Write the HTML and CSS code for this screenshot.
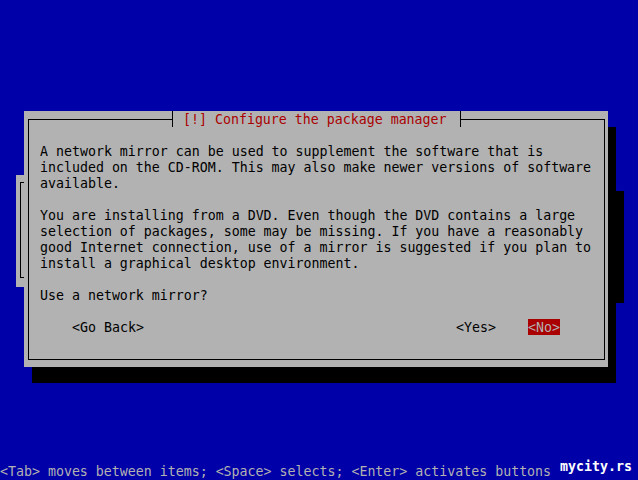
FILE: index.html
```html
<!DOCTYPE html>
<html lang="en">
<head>
<meta charset="utf-8">
<title>Configure the package manager</title>
<link rel="stylesheet" href="styles.css">
</head>
<body>
<div class="screen">
  <div class="back-shadow"></div>
  <div class="back-box"><div class="back-frame"></div></div>
  <div class="dlg-shadow"></div>
  <div class="dialog">
    <div class="frame">
      <div class="content">
        <p>A network mirror can be used to supplement the software that is<br>included on the CD-ROM. This may also make newer versions of software<br>available.</p>
        <p>You are installing from a DVD. Even though the DVD contains a large<br>selection of packages, some may be missing. If you have a reasonably<br>good Internet connection, use of a mirror is suggested if you plan to<br>install a graphical desktop environment.</p>
        <p>Use a network mirror?</p>
        <div class="buttons">
          <span class="btn">&lt;Go Back&gt;</span>
          <span class="spacer"></span>
          <span class="btn">&lt;Yes&gt;</span>
          <span class="btn btn-active">&lt;No&gt;</span>
        </div>
      </div>
    </div>
  </div>
  <div class="title"><div class="title-inner">[!] Configure the package manager</div></div>
  <div class="status">&lt;Tab&gt; moves between items; &lt;Space&gt; selects; &lt;Enter&gt; activates buttons</div>
</div>
<div class="watermark">mycity.rs</div>
</body>
</html>
```
FILE: styles.css
```css
html, body {
  margin: 0;
  padding: 0;
}
body {
  width: 638px;
  height: 480px;
  overflow: hidden;
  background: #0000a8;
  position: relative;
  font-family: "DejaVu Sans Mono", "Liberation Mono", monospace;
  font-size: 13.288px;
  line-height: 16px;
  color: #000;
}
.screen {
  display: grid;
  grid-template-columns: repeat(80, 8px);
  grid-template-rows: repeat(30, 16px);
  width: 640px;
  margin-top: -1px;
}
.back-shadow {
  grid-column: 4 / 79;
  grid-row: 13 / 20;
  background: #000;
}
.back-box {
  grid-column: 3 / 77;
  grid-row: 12 / 19;
  background: #b2b2b2;
  display: flex;
}
.back-frame {
  flex: 1;
  margin: 7px 3px 9px 4px;
  border: 1px solid #000;
}
.dlg-shadow {
  grid-column: 5 / 78;
  grid-row: 9 / 25;
  background: #000;
}
.dialog {
  grid-column: 4 / 77;
  grid-row: 8 / 24;
  background: #b2b2b2;
  display: flex;
  flex-direction: column;
}
.frame {
  flex: 1;
  margin: 8px 3px 7px 4px;
  border: 1px solid #000;
  padding: 24px 4px 0 11px;
}
.content p {
  margin: 0 0 16px;
  white-space: nowrap;
}
.content p:last-of-type {
  margin-bottom: 0;
}
.buttons {
  display: flex;
  margin-top: 15px;
  padding: 0 40px 0 32px;
  gap: 32px;
}
.btn {
  display: block;
  height: 16px;
  box-sizing: border-box;
  padding-top: 1px;
  white-space: pre;
}
.spacer {
  flex: 1;
}
.btn-active {
  background: #aa0000;
  color: #b2b2b2;
}
.title {
  grid-column: 22 / 59;
  grid-row: 8;
  display: flex;
}
.title-inner {
  flex: 1;
  margin: 0 3px 0 4px;
  border-left: 1px solid #000;
  border-right: 1px solid #000;
  background: #b2b2b2;
  color: #aa0000;
  padding: 1px 0 0 10px;
  white-space: pre;
}
.status {
  grid-column: 1 / -1;
  grid-row: 30;
  padding-top: 1px;
  color: #b2b2b2;
  white-space: pre;
}
.watermark {
  position: absolute;
  left: 560px;
  top: 459px;
  color: #fff;
  font-weight: bold;
  white-space: pre;
}
```
